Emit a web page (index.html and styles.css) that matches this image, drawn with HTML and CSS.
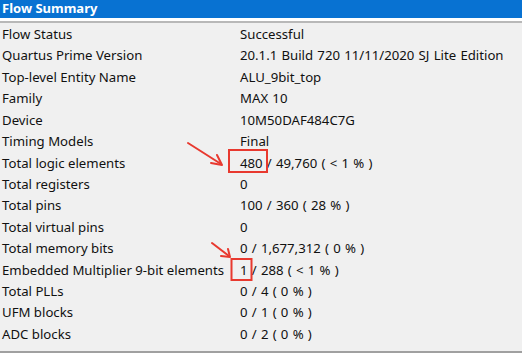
FILE: index.html
```html
<!DOCTYPE html>
<html>
<head>
<meta charset="utf-8">
<link rel="stylesheet" href="styles.css">
</head>
<body>
<div class="panel">
  <div class="title">Flow Summary</div>
  <div class="rule"></div>
  <div class="table">
    <div class="k">Flow Status</div><div class="v">Successful</div>
    <div class="k">Quartus Prime Version</div><div class="v">20.1.1 Build 720 11/11/2020 SJ Lite Edition</div>
    <div class="k">Top-level Entity Name</div><div class="v">ALU_9bit_top</div>
    <div class="k">Family</div><div class="v">MAX 10</div>
    <div class="k">Device</div><div class="v">10M50DAF484C7G</div>
    <div class="k">Timing Models</div><div class="v">Final</div>
    <div class="k">Total logic elements</div><div class="v">480 / 49,760 ( &lt; 1 % )</div>
    <div class="k">Total registers</div><div class="v">0</div>
    <div class="k">Total pins</div><div class="v">100 / 360 ( 28 % )</div>
    <div class="k">Total virtual pins</div><div class="v">0</div>
    <div class="k">Total memory bits</div><div class="v">0 / 1,677,312 ( 0 % )</div>
    <div class="k">Embedded Multiplier 9-bit elements</div><div class="v">1 / 288 ( &lt; 1 % )</div>
    <div class="k">Total PLLs</div><div class="v">0 / 4 ( 0 % )</div>
    <div class="k">UFM blocks</div><div class="v">0 / 1 ( 0 % )</div>
    <div class="k">ADC blocks</div><div class="v">0 / 2 ( 0 % )</div>
  </div>
  <svg class="marks" width="525" height="355" viewBox="0 0 525 355">
    <rect x="229" y="150" width="38" height="22" class="box"/>
    <line x1="188" y1="143" x2="221" y2="164" class="arrow"/>
    <polyline points="211,163 222,165 217,155" class="arrow"/>
    <rect x="231.5" y="259" width="20" height="21" class="box"/>
    <line x1="212" y1="243" x2="229" y2="256" class="arrow"/>
    <polyline points="221,256 230,257 228,249" class="arrow"/>
  </svg>
</div>
</body>
</html>
```
FILE: styles.css
```css
html, body {
  margin: 0;
  padding: 0;
  background: #ffffff;
}

.panel {
  position: relative;
  width: 522px;
  height: 353px;
  background: #f0f0f0;
  border-bottom: 2px solid #a0a0a0;
  box-sizing: border-box;
  font-family: "Noto Sans", "Open Sans", sans-serif;
  font-size: 13.2px;
  color: #111111;
}

.title {
  height: 18px;
  line-height: 17px;
  background: #0872d2;
  color: #ffffff;
  font-weight: bold;
  padding-left: 2px;
  font-size: 13px;
}

.rule {
  height: 3px;
  background: #ffffff;
  border-bottom: 2px solid #b8b8b8;
}

.table {
  display: grid;
  grid-template-columns: 238px auto;
  grid-auto-rows: 21.43px;
  padding-left: 2px;
  padding-top: 1px;
}

.k, .v {
  line-height: 21.43px;
  white-space: nowrap;
}

.v {
  word-spacing: 0.8px;
}

.marks {
  position: absolute;
  left: 0;
  top: 0;
  pointer-events: none;
}

.box {
  fill: none;
  stroke: #e8392f;
  stroke-width: 2;
}

.arrow {
  fill: none;
  stroke: #e8392f;
  stroke-width: 2;
  stroke-linecap: round;
  stroke-linejoin: round;
}
```
